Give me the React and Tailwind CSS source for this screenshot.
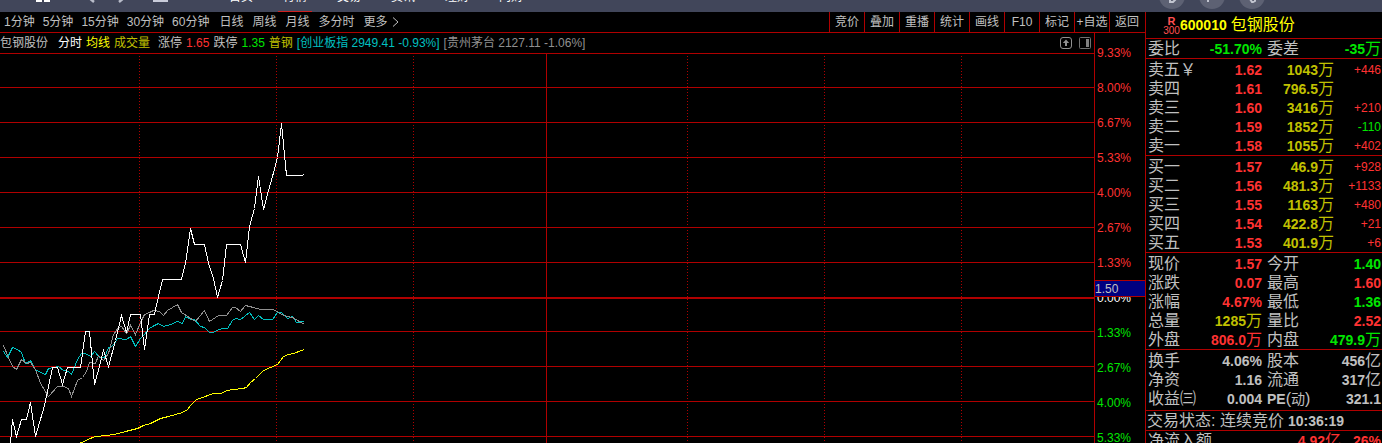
import React from "react";

const NAV = ["首页", "行情", "交易", "资讯", "理财", "问财"];

const MINUTES = ["1分钟", "5分钟", "15分钟", "30分钟", "60分钟"];

const SPANS = ["日线", "周线", "月线", "多分时"];

const TOOLS = ["竞价", "叠加", "重播", "统计", "画线", "F10", "标记", "+自选", "返回"];

const SCALE = [
  ["9.33%", "text-[#ff3232]"],
  ["8.00%", "text-[#ff3232]"],
  ["6.67%", "text-[#ff3232]"],
  ["5.33%", "text-[#ff3232]"],
  ["4.00%", "text-[#ff3232]"],
  ["2.67%", "text-[#ff3232]"],
  ["1.33%", "text-[#ff3232]"],
  ["0.00%", "text-white"],
  ["1.33%", "text-[#00e600]"],
  ["2.67%", "text-[#00e600]"],
  ["4.00%", "text-[#00e600]"],
  ["5.33%", "text-[#00e600]"],
];

const RED = "text-[#ff3232]";
const GREEN = "text-[#00e600]";
const GRAY = "text-[#c0c0c0]";
const YELLOW = "text-[#c0c000]";

const SELLS = [
  ["卖五￥", "1.62", "1043", "+446", RED],
  ["卖四", "1.61", "796.5", "", RED],
  ["卖三", "1.60", "3416", "+210", RED],
  ["卖二", "1.59", "1852", "-110", GREEN],
  ["卖一", "1.58", "1055", "+402", RED],
];

const BUYS = [
  ["买一", "1.57", "46.9", "+928", RED],
  ["买二", "1.56", "481.3", "+1133", RED],
  ["买三", "1.55", "1163", "+480", RED],
  ["买四", "1.54", "422.8", "+21", RED],
  ["买五", "1.53", "401.9", "+6", RED],
];

const RATIO = [["委比", "-51.70%", "", GREEN, "委差", "-35", "万", GREEN]];

const QUOTES = [
  ["现价", "1.57", "", RED, "今开", "1.40", "", GREEN],
  ["涨跌", "0.07", "", RED, "最高", "1.60", "", RED],
  ["涨幅", "4.67%", "", RED, "最低", "1.36", "", GREEN],
  ["总量", "1285", "万", YELLOW, "量比", "2.52", "", RED],
  ["外盘", "806.0", "万", RED, "内盘", "479.9", "万", GREEN],
];

const FUNDAMENTALS = [
  ["换手", "4.06%", "", GRAY, "股本", "456", "亿", GRAY],
  ["净资", "1.16", "", GRAY, "流通", "317", "亿", GRAY],
  ["收益㈢", "0.004", "", GRAY, "PE(动)", "321.1", "", GRAY],
];

const GRID_Y = [87, 122, 157, 192, 227, 262, 331, 366, 401, 436];
const GRID_X = [139, 276, 413, 687, 824, 961];

const PRICE_LINE =
  "10,443 12,419 16,436 21,419 26,419 30,402 35,436 44,405 52,367 57,367 62,384 67,367 80,367 85,331 89,331 94,384 100,362 103,350 108,366 115,340 121,315 126,332 130,314 140,314 144,349 149,314 154,314 155,309 162,279 181,279 185,263 190,228 194,244 204,244 208,263 213,278 217,297 222,280 226,244 240,244 245,262 249,226 254,208 258,176 263,209 268,190 272,176 277,157 281,123 286,175 301,175 304,174";
const INDEX_LINE =
  "3,351 7,357 12,347 17,349 21,352 25,363 30,360 35,369 40,372 45,374 48,368 53,367 58,366 63,370 68,371 71,374 77,359 81,353 85,353 90,356 94,351 99,357 104,357 108,347 113,345 117,338 126,339 130,336 135,346 140,338 144,334 149,328 154,325 158,323 163,326 170,324 177,321 182,323 185,316 190,319 194,319 200,326 204,327 209,332 213,332 218,329 223,328 227,328 232,320 235,318 240,319 249,312 254,319 258,315 263,319 272,319 277,312 281,312 287,318 292,316 296,322 304,321";
const PEER_LINE =
  "3,345 8,357 12,366 16,369 21,359 26,363 30,362 35,369 40,383 48,396 57,386 63,386 68,388 71,396 77,380 82,377 86,371 89,362 95,363 98,355 103,360 108,353 113,334 118,327 121,326 126,333 130,325 135,334 140,322 144,314 149,312 153,310 159,311 163,315 167,310 177,304 181,312 195,321 204,310 209,321 218,315 226,315 232,307 235,307 240,311 245,305 253,307 260,309 273,309 278,312 283,315 292,317 304,324";
const AVERAGE_LINE =
  "78,443 82,442 87,439 95,436 107,435 118,433 125,431 137,428 143,425 150,423 160,418 168,416 175,414 182,412 187,409 190,405 196,399 202,397 213,393 220,393 227,390 233,389 242,388 246,387 250,382 255,378 263,370 277,364 283,356 288,354 293,353 304,349";

function TitleBar() {
  return (
    <header className="flex h-3 shrink-0 items-end justify-between overflow-hidden bg-[#41465a]">
      <div className="flex items-end">
        <svg className="mr-4 h-5 w-[200px]" viewBox="0 0 200 20" aria-hidden="true">
          <path d="M36 -4h6v14h-6zM44 -4h6v14h-6z" fill="#fff" />
          <path d="M94 0l-6 5 6 5M119 10l6-5-6-5" stroke="#b9bdca" strokeWidth="2.5" fill="none" />
          <path d="M153 0h15v10h-15z" fill="#c9ccda" />
        </svg>
        <nav className="flex gap-5 pl-2">
          {NAV.map((name) => (
            <a
              key={name}
              href="#"
              className={
                name === "行情"
                  ? "flex h-8 w-[34px] justify-center whitespace-nowrap border-b border-[#d02020] pt-[9px] text-xs text-white"
                  : "flex h-8 w-[34px] justify-center whitespace-nowrap border-b border-transparent pt-[9px] text-xs text-white"
              }
            >
              {name}
            </a>
          ))}
        </nav>
      </div>
      <svg className="h-3 w-[237px]" viewBox="0 0 237 12" aria-hidden="true">
        <circle cx="27" cy="-4" r="13" fill="#5d6173" />
        <circle cx="67" cy="-4" r="13" fill="#5d6173" />
        <circle cx="107" cy="-4" r="13" fill="#5d6173" />
        <path d="M25 -1v3h3l3-3M63 2v-4M105 -1h5v2l-2 1h-1z" stroke="#c2c5d0" strokeWidth="2" fill="none" />
      </svg>
    </header>
  );
}

function Toolbar() {
  return (
    <div className="flex h-[21px] shrink-0 items-stretch justify-between border-b border-[#b00000] text-xs text-[#c0c0c0]">
      <div className="flex items-center gap-[10px] pl-1">
        <div className="flex gap-2">
          {MINUTES.map((name) => (
            <button key={name} className="whitespace-nowrap">
              {name}
            </button>
          ))}
        </div>
        <div className="flex gap-[9px]">
          {SPANS.map((name) => (
            <button key={name} className="whitespace-nowrap">
              {name}
            </button>
          ))}
          <button className="flex items-center gap-1 whitespace-nowrap">
            更多
            <svg className="h-2.5 w-2" viewBox="0 0 8 10" aria-hidden="true">
              <path d="M1 0.5l5 4.5-5 4.5" stroke="#c0c0c0" fill="none" />
            </svg>
          </button>
        </div>
      </div>
      <div className="flex pr-px">
        {TOOLS.map((name) => (
          <button
            key={name}
            className="w-[35px] whitespace-nowrap border-l border-[#b00000] text-center"
          >
            {name}
          </button>
        ))}
      </div>
    </div>
  );
}

function InfoLine() {
  return (
    <div className="flex h-[21px] shrink-0 items-center justify-between border-b border-[#b00000] pr-[3px] text-xs">
      <div className="flex items-center gap-1 whitespace-nowrap">
        <span className="mr-1.5 text-[#c0c0c0]">包钢股份</span>
        <span className="text-white">分时</span>
        <span className="text-[#ffff00]">均线</span>
        <span className="mr-1 text-[#c0c000]">成交量</span>
        <span className="flex gap-1 text-[#c0c0c0]">
          涨停 <span className="text-[#ff3232]">1.65</span>
        </span>
        <span className="flex gap-1 text-[#c0c0c0]">
          跌停 <span className="text-[#00e600]">1.35</span>
        </span>
        <span className="text-[#c0c000]">普钢</span>
        <span className="text-[#00c0c0]">[创业板指 2949.41 -0.93%]</span>
        <span className="text-[#909090]">[贵州茅台 2127.11 -1.06%]</span>
      </div>
      <div className="flex gap-[7px]">
        <button aria-label="上移">
          <svg className="block h-3 w-3" viewBox="0 0 12 12" aria-hidden="true">
            <rect x="0.5" y="0.5" width="11" height="11" rx="2.5" stroke="#909090" fill="none" />
            <path d="M6 2.5l3.2 3.5H7v3H5V6H2.8z" fill="#909090" />
          </svg>
        </button>
        <button aria-label="侧栏">
          <svg className="block h-3 w-3" viewBox="0 0 12 12" aria-hidden="true">
            <rect x="0.5" y="0.5" width="11" height="11" rx="1" stroke="#707070" fill="none" />
            <path d="M7 2h3v8H7z" fill="#808080" />
          </svg>
        </button>
      </div>
    </div>
  );
}

function Chart() {
  return (
    <svg
      className="block h-[389px] w-full"
      viewBox="0 54 1094 389"
      preserveAspectRatio="none"
      shapeRendering="crispEdges"
      role="img"
      aria-label="分时走势"
    >
      {GRID_Y.map((y) => (
        <rect key={y} x="0" y={y} width="1094" height="1" fill="#b00000" />
      ))}
      <rect x="0" y="297" width="1094" height="2" fill="#b00000" />
      {GRID_X.map((x) => (
        <line key={x} x1={x + 0.5} x2={x + 0.5} y1="56" y2="443" stroke="#b00000" strokeDasharray="1 2" />
      ))}
      <rect x="546" y="54" width="1" height="389" fill="#b00000" />
      <g fill="none" strokeWidth="1" transform="translate(0.5 0.5)">
        <polyline points={AVERAGE_LINE} stroke="#ffff00" />
        <polyline points={INDEX_LINE} stroke="#00c0c0" />
        <polyline points={PEER_LINE} stroke="#909090" />
        <polyline points={PRICE_LINE} stroke="#ffffff" />
      </g>
    </svg>
  );
}

function Scale() {
  return (
    <div className="relative w-[51px] shrink-0 border-l border-[#b00000] pt-0.5 text-xs">
      {SCALE.map(([value, color], i) => (
        <div key={i} className={"flex h-[35px] items-center pl-0.5 " + color}>
          {value}
        </div>
      ))}
      <div className="absolute left-0 top-[247px] flex h-[17px] w-full items-center border-y border-[#b00000] bg-[#000080] text-[#c0c0c0]">
        1.50
      </div>
    </div>
  );
}

function Cell({ value, unit, color, className }) {
  return (
    <td className={"p-0 " + className}>
      <div className={"flex h-[19px] items-center justify-end whitespace-nowrap text-sm font-bold " + color}>
        {value}
        {unit && <span className="text-base font-normal">{unit}</span>}
      </div>
    </td>
  );
}

function Label({ children, className }) {
  return (
    <th scope="row" className={"p-0 text-left font-normal " + className}>
      <div className="flex h-[19px] items-center whitespace-nowrap text-base text-[#c0c0c0]">{children}</div>
    </th>
  );
}

function OrderTable({ rows }) {
  return (
    <div className="border-b border-[#b00000] pt-px">
      <table className="w-full table-fixed border-collapse">
        <tbody>
          {rows.map(([label, price, amount, delta, color]) => (
            <tr key={label}>
              <Label className="w-[60px] pl-0.5">{label}</Label>
              <Cell value={price} color={RED} className="w-14" />
              <Cell value={amount} unit="万" color={YELLOW} className="w-[72px]" />
              <td className="p-0 pr-px">
                <div className={"flex h-[19px] items-center justify-end text-xs " + color}>{delta}</div>
              </td>
            </tr>
          ))}
        </tbody>
      </table>
    </div>
  );
}

function PairTable({ rows, className }) {
  return (
    <div className={"border-b border-[#b00000] " + className}>
      <table className="w-full table-fixed border-collapse">
        <tbody>
          {rows.map(([l1, v1, u1, c1, l2, v2, u2, c2]) => (
            <tr key={l1}>
              <Label className="w-[60px] pl-0.5">{l1}</Label>
              <Cell value={v1} unit={u1} color={c1} className="w-14" />
              <Label className="w-[60px] pl-[5px]">
                {l2.startsWith("PE") ? (
                  <>
                    <span className="text-sm font-bold">PE</span>(<span className="text-sm">动</span>)
                  </>
                ) : (
                  l2
                )}
              </Label>
              <Cell value={v2} unit={u2} color={c2} className="pr-px" />
            </tr>
          ))}
        </tbody>
      </table>
    </div>
  );
}

function QuotePanel() {
  return (
    <aside className="w-[237px] shrink-0 overflow-hidden border-l border-[#b00000]">
      <div className="flex h-[27px] items-center gap-1 border-b border-[#b00000] pl-[17px] text-[#ffff00]">
        <div className="flex items-center">
          <span className="flex w-[17px] flex-col items-center pt-px text-xs leading-[10px] text-[#ff5050]">
            <b className="text-[11px] leading-[10px]">R</b>
            <span className="text-[10px] leading-[10px]">300</span>
          </span>
          <b className="text-sm">600010</b>
        </div>
        <h1 className="text-base">包钢股份</h1>
      </div>
      <PairTable rows={RATIO} className="" />
      <OrderTable rows={SELLS} />
      <OrderTable rows={BUYS} />
      <PairTable rows={QUOTES} className="pt-px" />
      <PairTable rows={FUNDAMENTALS} className="pb-0.5 pt-px" />
      <div className="flex h-5 items-center gap-1 border-b border-[#b00000] pl-px text-base text-[#c0c0c0]">
        <span className="whitespace-nowrap">交易状态: 连续竞价</span>
        <b className="text-sm">10:36:19</b>
      </div>
      <div className="flex h-5 items-center justify-between pl-0.5 pr-px text-base text-[#c0c0c0]">
        <span>净流入额</span>
        <span className="flex items-center text-sm font-bold text-[#ff3232]">
          4.92<span className="mr-3 text-base font-normal">亿</span>26%
        </span>
      </div>
    </aside>
  );
}

export default function App() {
  return (
    <div className="flex h-screen flex-col overflow-hidden bg-black font-['Liberation_Sans','Noto_Sans_CJK_SC',sans-serif]">
      <TitleBar />
      <div className="flex min-h-0 flex-1">
        <main className="flex min-w-0 flex-1 flex-col">
          <Toolbar />
          <div className="flex min-h-0 flex-1 overflow-hidden">
            <div className="min-w-0 flex-1">
              <InfoLine />
              <Chart />
            </div>
            <Scale />
          </div>
        </main>
        <QuotePanel />
      </div>
    </div>
  );
}
